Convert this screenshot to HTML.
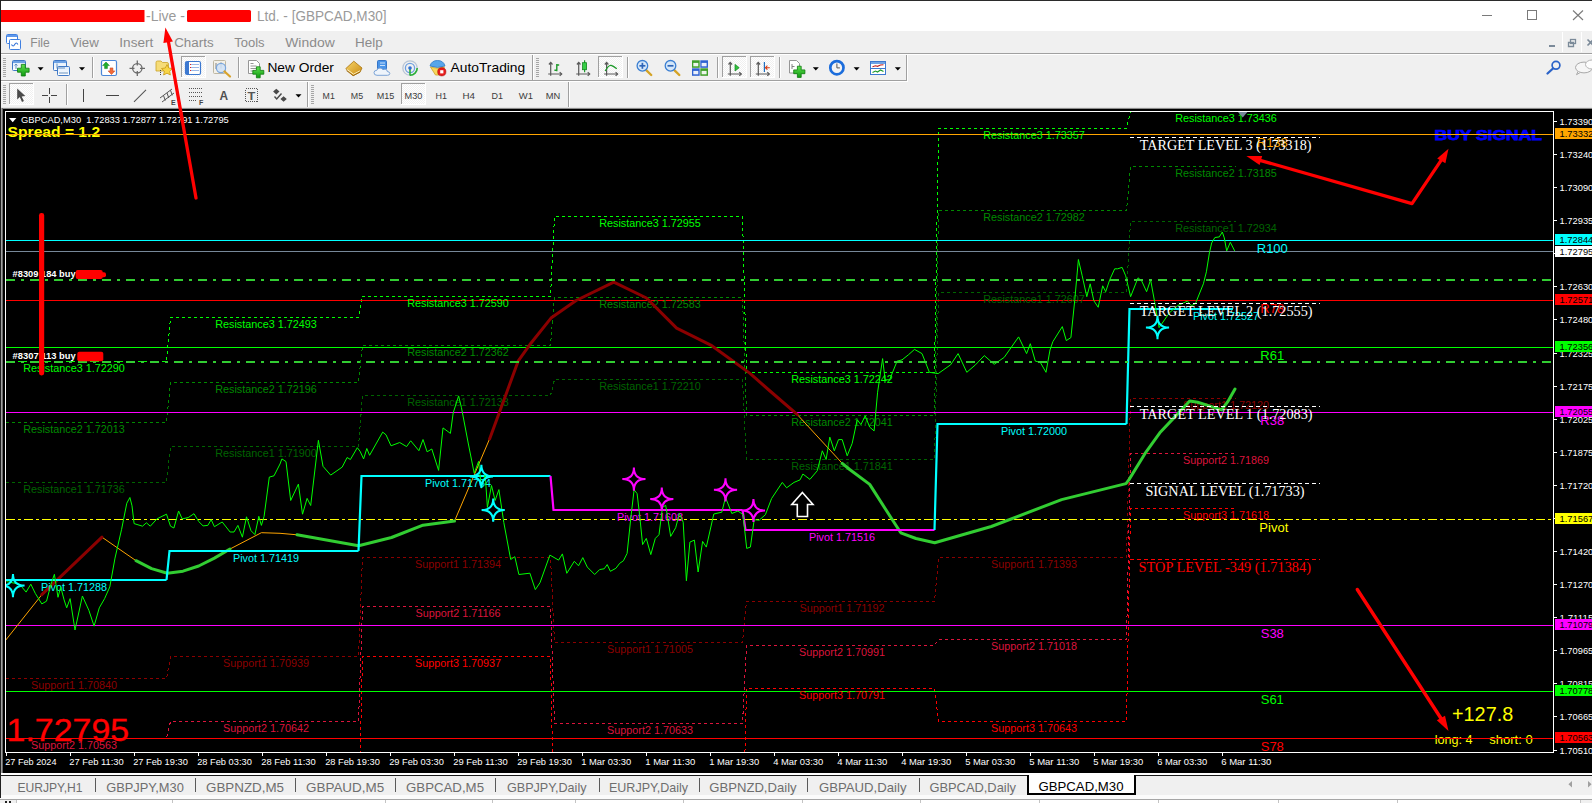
<!DOCTYPE html>
<html><head><meta charset="utf-8"><title>GBPCAD,M30</title>
<style>
html,body{margin:0;padding:0;background:#f0f0f0;overflow:hidden;}
body{width:1592px;height:803px;font-family:"Liberation Sans",sans-serif;}
svg{display:block;position:absolute;left:0;top:0;}
text{white-space:pre;}
</style></head><body>
<svg width="1592" height="803" viewBox="0 0 1592 803">
<rect x="0" y="0" width="1592" height="803" fill="#f0f0f0" />
<rect x="0" y="0" width="1592" height="31" fill="#ffffff" />
<rect x="0" y="0" width="1592" height="1" fill="#2b2b2b" />
<rect x="0" y="10" width="144.5" height="12" fill="#ff0000" />
<rect x="187" y="10" width="64" height="12" fill="#ff0000" rx="1.5"/>
<text x="146" y="20.6" font-family="Liberation Sans" font-size="14.2" fill="#9a9a9a" font-weight="normal" text-anchor="start" textLength="39" lengthAdjust="spacingAndGlyphs" >-Live -</text>
<text x="257" y="20.6" font-family="Liberation Sans" font-size="14.2" fill="#9a9a9a" font-weight="normal" text-anchor="start" textLength="129.5" lengthAdjust="spacingAndGlyphs" >Ltd. - [GBPCAD,M30]</text>
<g stroke="#7a7a7a" stroke-width="1" fill="none" shape-rendering="crispEdges">
<line x1="1482" y1="15.5" x2="1492" y2="15.5"/>
<rect x="1527.5" y="10.5" width="9" height="9"/>
</g>
<g stroke="#7a7a7a" stroke-width="1.1" fill="none"><line x1="1573" y1="10.5" x2="1583" y2="20"/><line x1="1583" y1="10.5" x2="1573" y2="20"/></g>
<rect x="0" y="31" width="1592" height="22" fill="#f0f0f0" />
<g fill="#ffffff" stroke="#3f7fe0" stroke-width="1"><rect x="6.5" y="34.5" width="11" height="9" rx="1"/><rect x="9.5" y="39.5" width="11" height="10" rx="1"/></g>
<rect x="7" y="35" width="10" height="2" fill="#5f97ea" />
<path d="M11.5 44.5 q1.6 3 3.2 0 t3.2 0" fill="none" stroke="#2f6fd6" stroke-width="1.1"/>
<text x="30.3" y="46.8" font-family="Liberation Sans" font-size="13.7" fill="#8b8b8b" font-weight="normal" text-anchor="start" textLength="19.5" lengthAdjust="spacingAndGlyphs" >File</text>
<text x="70.2" y="46.8" font-family="Liberation Sans" font-size="13.7" fill="#8b8b8b" font-weight="normal" text-anchor="start" textLength="28.6" lengthAdjust="spacingAndGlyphs" >View</text>
<text x="119.3" y="46.8" font-family="Liberation Sans" font-size="13.7" fill="#8b8b8b" font-weight="normal" text-anchor="start" textLength="34.0" lengthAdjust="spacingAndGlyphs" >Insert</text>
<text x="174.2" y="46.8" font-family="Liberation Sans" font-size="13.7" fill="#8b8b8b" font-weight="normal" text-anchor="start" textLength="39.4" lengthAdjust="spacingAndGlyphs" >Charts</text>
<text x="234.2" y="46.8" font-family="Liberation Sans" font-size="13.7" fill="#8b8b8b" font-weight="normal" text-anchor="start" textLength="30.4" lengthAdjust="spacingAndGlyphs" >Tools</text>
<text x="285.2" y="46.8" font-family="Liberation Sans" font-size="13.7" fill="#8b8b8b" font-weight="normal" text-anchor="start" textLength="49.5" lengthAdjust="spacingAndGlyphs" >Window</text>
<text x="355" y="46.8" font-family="Liberation Sans" font-size="13.7" fill="#8b8b8b" font-weight="normal" text-anchor="start" textLength="27.7" lengthAdjust="spacingAndGlyphs" >Help</text>
<rect x="1544" y="32" width="48" height="20" fill="#f0f0f0" />
<rect x="1562" y="32" width="1" height="20" fill="#ffffff" />
<rect x="1581" y="32" width="1" height="20" fill="#ffffff" />
<rect x="1549" y="45" width="6" height="2" fill="#7b8a99" />
<g fill="none" stroke="#7b8a99" stroke-width="1.3"><rect x="1570.5" y="39.5" width="5" height="4"/><path d="M1568.5 46.5 h5 v-4 h-5 z"/></g>
<path d="M1587.5 39.5 l6 6 m0 -6 l-6 6" stroke="#7b8a99" stroke-width="1.6" fill="none"/>
<rect x="0" y="53" width="1592" height="1" fill="#a0a0a0" />
<rect x="0" y="54" width="1592" height="1" fill="#ffffff" />
<rect x="0" y="80" width="907" height="1" fill="#a0a0a0" />
<rect x="0" y="81" width="907" height="1" fill="#ffffff" />
<rect x="906" y="55" width="1" height="26" fill="#a0a0a0" />
<rect x="907" y="55" width="1" height="27" fill="#ffffff" />
<rect x="532" y="55" width="1" height="25" fill="#a0a0a0" />
<rect x="533" y="55" width="1" height="25" fill="#ffffff" />
<rect x="568" y="82" width="1" height="25" fill="#a0a0a0" />
<rect x="569" y="82" width="1" height="25" fill="#ffffff" />
<rect x="307" y="82" width="1" height="25" fill="#a0a0a0" />
<rect x="308" y="82" width="1" height="25" fill="#ffffff" />
<rect x="3" y="58" width="3" height="1" fill="#a6a6a6" />
<rect x="3" y="60" width="3" height="1" fill="#a6a6a6" />
<rect x="3" y="62" width="3" height="1" fill="#a6a6a6" />
<rect x="3" y="64" width="3" height="1" fill="#a6a6a6" />
<rect x="3" y="66" width="3" height="1" fill="#a6a6a6" />
<rect x="3" y="68" width="3" height="1" fill="#a6a6a6" />
<rect x="3" y="70" width="3" height="1" fill="#a6a6a6" />
<rect x="3" y="72" width="3" height="1" fill="#a6a6a6" />
<rect x="3" y="74" width="3" height="1" fill="#a6a6a6" />
<rect x="3" y="76" width="3" height="1" fill="#a6a6a6" />
<rect x="536" y="58" width="3" height="1" fill="#a6a6a6" />
<rect x="536" y="60" width="3" height="1" fill="#a6a6a6" />
<rect x="536" y="62" width="3" height="1" fill="#a6a6a6" />
<rect x="536" y="64" width="3" height="1" fill="#a6a6a6" />
<rect x="536" y="66" width="3" height="1" fill="#a6a6a6" />
<rect x="536" y="68" width="3" height="1" fill="#a6a6a6" />
<rect x="536" y="70" width="3" height="1" fill="#a6a6a6" />
<rect x="536" y="72" width="3" height="1" fill="#a6a6a6" />
<rect x="536" y="74" width="3" height="1" fill="#a6a6a6" />
<rect x="536" y="76" width="3" height="1" fill="#a6a6a6" />
<rect x="3" y="85" width="3" height="1" fill="#a6a6a6" />
<rect x="3" y="87" width="3" height="1" fill="#a6a6a6" />
<rect x="3" y="89" width="3" height="1" fill="#a6a6a6" />
<rect x="3" y="91" width="3" height="1" fill="#a6a6a6" />
<rect x="3" y="93" width="3" height="1" fill="#a6a6a6" />
<rect x="3" y="95" width="3" height="1" fill="#a6a6a6" />
<rect x="3" y="97" width="3" height="1" fill="#a6a6a6" />
<rect x="3" y="99" width="3" height="1" fill="#a6a6a6" />
<rect x="3" y="101" width="3" height="1" fill="#a6a6a6" />
<rect x="3" y="103" width="3" height="1" fill="#a6a6a6" />
<rect x="311" y="85" width="3" height="1" fill="#a6a6a6" />
<rect x="311" y="87" width="3" height="1" fill="#a6a6a6" />
<rect x="311" y="89" width="3" height="1" fill="#a6a6a6" />
<rect x="311" y="91" width="3" height="1" fill="#a6a6a6" />
<rect x="311" y="93" width="3" height="1" fill="#a6a6a6" />
<rect x="311" y="95" width="3" height="1" fill="#a6a6a6" />
<rect x="311" y="97" width="3" height="1" fill="#a6a6a6" />
<rect x="311" y="99" width="3" height="1" fill="#a6a6a6" />
<rect x="311" y="101" width="3" height="1" fill="#a6a6a6" />
<rect x="311" y="103" width="3" height="1" fill="#a6a6a6" />
<rect x="92" y="57" width="1" height="21" fill="#a0a0a0" />
<rect x="93" y="57" width="1" height="21" fill="#ffffff" />
<rect x="238" y="57" width="1" height="21" fill="#a0a0a0" />
<rect x="239" y="57" width="1" height="21" fill="#ffffff" />
<rect x="627" y="57" width="1" height="21" fill="#a0a0a0" />
<rect x="628" y="57" width="1" height="21" fill="#ffffff" />
<rect x="717" y="57" width="1" height="21" fill="#a0a0a0" />
<rect x="718" y="57" width="1" height="21" fill="#ffffff" />
<rect x="779" y="57" width="1" height="21" fill="#a0a0a0" />
<rect x="780" y="57" width="1" height="21" fill="#ffffff" />
<rect x="66" y="84" width="1" height="21" fill="#a0a0a0" />
<rect x="67" y="84" width="1" height="21" fill="#ffffff" />
<defs><pattern id="chk" width="2" height="2" patternUnits="userSpaceOnUse"><rect width="2" height="2" fill="#ffffff"/><rect width="1" height="1" fill="#f0f0f0"/><rect x="1" y="1" width="1" height="1" fill="#f0f0f0"/></pattern><linearGradient id="gplus" x1="0" y1="0" x2="0" y2="1"><stop offset="0" stop-color="#5fe04f"/><stop offset="1" stop-color="#0f9a10"/></linearGradient><linearGradient id="gblue" x1="0" y1="0" x2="0" y2="1"><stop offset="0" stop-color="#dcebfb"/><stop offset="1" stop-color="#ffffff"/></linearGradient><linearGradient id="ggold" x1="0" y1="0" x2="1" y2="1"><stop offset="0" stop-color="#f7d56a"/><stop offset="1" stop-color="#c98a12"/></linearGradient></defs>
<rect x="181" y="56" width="25" height="22" fill="url(#chk)"/>
<rect x="181" y="56" width="25" height="1" fill="#a0a0a0" />
<rect x="181" y="56" width="1" height="22" fill="#a0a0a0" />
<rect x="181" y="77" width="25" height="1" fill="#ffffff" />
<rect x="205" y="56" width="1" height="22" fill="#ffffff" />
<rect x="598" y="56" width="25" height="22" fill="url(#chk)"/>
<rect x="598" y="56" width="25" height="1" fill="#a0a0a0" />
<rect x="598" y="56" width="1" height="22" fill="#a0a0a0" />
<rect x="598" y="77" width="25" height="1" fill="#ffffff" />
<rect x="622" y="56" width="1" height="22" fill="#ffffff" />
<rect x="722" y="56" width="25" height="22" fill="url(#chk)"/>
<rect x="722" y="56" width="25" height="1" fill="#a0a0a0" />
<rect x="722" y="56" width="1" height="22" fill="#a0a0a0" />
<rect x="722" y="77" width="25" height="1" fill="#ffffff" />
<rect x="746" y="56" width="1" height="22" fill="#ffffff" />
<rect x="750" y="56" width="25" height="22" fill="url(#chk)"/>
<rect x="750" y="56" width="25" height="1" fill="#a0a0a0" />
<rect x="750" y="56" width="1" height="22" fill="#a0a0a0" />
<rect x="750" y="77" width="25" height="1" fill="#ffffff" />
<rect x="774" y="56" width="1" height="22" fill="#ffffff" />
<rect x="9" y="83" width="25" height="22" fill="url(#chk)"/>
<rect x="9" y="83" width="25" height="1" fill="#a0a0a0" />
<rect x="9" y="83" width="1" height="22" fill="#a0a0a0" />
<rect x="9" y="104" width="25" height="1" fill="#ffffff" />
<rect x="33" y="83" width="1" height="22" fill="#ffffff" />
<rect x="401" y="83" width="25" height="22" fill="url(#chk)"/>
<rect x="401" y="83" width="25" height="1" fill="#a0a0a0" />
<rect x="401" y="83" width="1" height="22" fill="#a0a0a0" />
<rect x="401" y="104" width="25" height="1" fill="#ffffff" />
<rect x="425" y="83" width="1" height="22" fill="#ffffff" />
<path d="M37.6 67.2 h6 l-3 3.2 z" fill="#000"/>
<path d="M79 67.2 h6 l-3 3.2 z" fill="#000"/>
<path d="M812.8 67.2 h6 l-3 3.2 z" fill="#000"/>
<path d="M853.6 67.2 h6 l-3 3.2 z" fill="#000"/>
<path d="M894.8 67.2 h6 l-3 3.2 z" fill="#000"/>
<path d="M295.5 94.2 h6 l-3 3.2 z" fill="#000"/>
<rect x="12.5" y="60.5" width="13" height="10" rx="1" fill="url(#gblue)" stroke="#3f78c6"/>
<rect x="13" y="61" width="12" height="2" fill="#6ea2e4" />
<path d="M16 64 v5 m-1.5 -3.5 l1.5 -1.5 1.5 1.5" stroke="#5a86b8" fill="none" stroke-width="0.9"/>
<path d="M21.3 64.4 h4 v3.8 h3.8 v4 h-3.8 v3.8 h-4 v-3.8 h-3.8 v-4 h3.8 z" fill="url(#gplus)" stroke="#0b7a0c" stroke-width="0.8"/>
<rect x="53.5" y="60.5" width="13" height="10" rx="1" fill="url(#gblue)" stroke="#3f78c6"/>
<rect x="57.5" y="66.5" width="12" height="9" rx="1" fill="url(#gblue)" stroke="#3f78c6"/>
<rect x="54" y="61" width="12" height="2" fill="#6ea2e4" />
<path d="M57 63.5 v5 M58 68 h7 M59 73 h9" stroke="#5a86b8" fill="none" stroke-width="0.9"/>
<rect x="101.5" y="60.5" width="15" height="15" rx="1.5" fill="#ffffff" stroke="#4a86d8" stroke-width="1.2"/>
<path d="M106 62 l3.4 3.6 h-2 v3 h-2.8 v-3 h-2 z" fill="#1fae2a" stroke="#0d7d15" stroke-width="0.5"/>
<path d="M111.5 74.5 l3.4 -3.6 h-2 v-3 h-2.8 v3 h-2 z" fill="#f26b3a" stroke="#c23a12" stroke-width="0.5"/>
<g stroke="#6a6a6a" fill="none" stroke-width="1.3"><circle cx="137.3" cy="68.3" r="4.7"/><path d="M137.3 60.5 v5 M137.3 71 v5 M129.5 68.3 h5 M140 68.3 h5"/></g>
<path d="M156 62.5 q0 -1.5 1.5 -1.5 h3.5 l1.5 1.5 h4.5 q1.5 0 1.5 1.5 v7 h-12.5 z" fill="#f6dc78" stroke="#c9a227" stroke-width="0.8"/>
<path d="M167 64.5 l1.7 3.5 3.8 .5 -2.8 2.7 .7 3.8 -3.4 -1.8 -3.4 1.8 .7 -3.8 -2.8 -2.7 3.8 -.5 z" fill="#f8d648" stroke="#c99a18" stroke-width="0.8"/>
<path d="M160.5 70 v6" stroke="#444" stroke-width="1" stroke-dasharray="1 1"/>
<rect x="185.5" y="61.5" width="15" height="13" rx="1.5" fill="#ffffff" stroke="#3c78d0" stroke-width="1.2"/>
<rect x="186" y="62" width="3" height="12" fill="#3c78d0" />
<rect x="191" y="64" width="8" height="1" fill="#9ab8e6" />
<rect x="191" y="67" width="8" height="1" fill="#9ab8e6" />
<rect x="191" y="70" width="8" height="1" fill="#9ab8e6" />
<rect x="190" y="64" width="1" height="1" fill="#e02020" />
<rect x="190" y="67" width="1" height="1" fill="#e02020" />
<rect x="190" y="70" width="1" height="1" fill="#e02020" />
<rect x="213.5" y="60.5" width="12" height="13" rx="1" fill="#f4f1e8" stroke="#b8b09a" stroke-width="0.9"/>
<path d="M216 63 v6 M221 62.5 v6" stroke="#777" stroke-width="0.9"/>
<circle cx="221" cy="68" r="4.6" fill="#cfe2f7" fill-opacity=".85" stroke="#7aa6dc" stroke-width="1.2"/>
<path d="M224.5 71.5 l5.5 5" stroke="#d8a22a" stroke-width="2.2" stroke-linecap="round"/>
<path d="M248.5 60.5 h8 l3 3 v10 h-11 z" fill="#ffffff" stroke="#8a8a8a" stroke-width="0.9"/>
<path d="M250.5 63.5 h3 M250.5 66 h6 M250.5 68.5 h6 M250.5 71 h4" stroke="#8a8a8a" stroke-width="0.9"/>
<path d="M256.40000000000003 66.8 h3.8 v3.6 h3.6 v3.8 h-3.6 v3.6 h-3.8 v-3.6 h-3.6 v-3.8 h3.6 z" fill="url(#gplus)" stroke="#0b7a0c" stroke-width="0.8"/>
<text x="267.4" y="71.9" font-family="Liberation Sans" font-size="13.4" fill="#000000" font-weight="normal" text-anchor="start" textLength="66.5" lengthAdjust="spacingAndGlyphs" >New Order</text>
<path d="M345.8 68.6 l8 -7.4 8.2 6.8 -2 4.2 -7 3.6 z" fill="url(#ggold)" stroke="#a8720c" stroke-width="0.8" stroke-linejoin="round"/>
<path d="M347.2 69.6 l6.4 4.6 6.4 -3.4" fill="none" stroke="#fff1c0" stroke-width="1"/>
<path d="M346.4 70.6 l6.8 5 7 -3.8" fill="none" stroke="#9a6408" stroke-width="0.8"/>
<rect x="377.5" y="60.5" width="9" height="9" rx="1" fill="#4a94e8" stroke="#2a6cc4" stroke-width="0.9"/>
<path d="M380 63 h5 M380 65.5 h5" stroke="#d8e9fb" stroke-width="0.9"/>
<path d="M377 75.3 q-3 0 -3 -2.6 q0 -2.4 2.8 -2.4 q.6 -2.3 3.2 -2.3 q2.2 0 3 1.8 q.8 -.9 2.3 -.6 q2 .3 2 2.3 q2.5 .2 2.5 2 q0 1.8 -2.4 1.8 z" fill="#eef4fb" stroke="#6f9bd2" stroke-width="0.9"/>
<g fill="none" stroke-width="1.3"><circle cx="410" cy="68" r="7.2" stroke="#b9c6d6"/><circle cx="410" cy="68" r="4.6" stroke="#6fa0e0"/><path d="M410 75.2 a7.2 7.2 0 0 0 7.2 -7.2" stroke="#2bb038" stroke-width="1.6"/><path d="M410 68 v7.4" stroke="#2bb038" stroke-width="1.6"/></g><circle cx="410" cy="68" r="1.8" fill="#2f6fd6"/>
<path d="M430 66 q1.5 -5.5 7.5 -5.5 q6 0 7.5 5.5 q-7.5 3 -15 0 z" fill="#58a6ea" stroke="#2f78c8" stroke-width="0.8"/>
<path d="M430.5 67 q7 2.8 14 0 l-5.5 8 h-3.5 z" fill="#f8d85a" stroke="#c9a227" stroke-width="0.8"/>
<circle cx="441.8" cy="71.8" r="4.1" fill="#e81c1c" stroke="#a80c0c" stroke-width="0.6"/>
<rect x="440.2" y="70.2" width="3.2" height="3.2" fill="#ffffff" />
<text x="450.6" y="71.9" font-family="Liberation Sans" font-size="13.4" fill="#000000" font-weight="normal" text-anchor="start" textLength="74.6" lengthAdjust="spacingAndGlyphs" >AutoTrading</text>
<g stroke="#5a5a5a" stroke-width="1.2" fill="none"><path d="M550.7 62.5 V75.8 M548.2 74 H561.7"/><path d="M548.9000000000001 64.5 L550.7 62.5 L552.5 64.5 M559.7 72.2 L561.7 74 L559.7 75.8"/></g>
<path d="M556.8 64 V71.2 M556.8 65 h2.4 M554.4 70.2 h2.4" stroke="#1d9a2a" stroke-width="1.4" fill="none"/>
<g stroke="#5a5a5a" stroke-width="1.2" fill="none"><path d="M578.7 62.5 V75.8 M576.2 74 H589.7"/><path d="M576.9000000000001 64.5 L578.7 62.5 L580.5 64.5 M587.7 72.2 L589.7 74 L587.7 75.8"/></g>
<path d="M584.6 60.2 V72.3" stroke="#1d9a2a" stroke-width="1.2"/><rect x="582.6" y="62.7" width="4" height="7" fill="#35cf45" stroke="#13851f" stroke-width="0.8"/>
<g stroke="#5a5a5a" stroke-width="1.2" fill="none"><path d="M606.6 62.5 V75.8 M604.1 74 H617.6"/><path d="M604.8000000000001 64.5 L606.6 62.5 L608.4 64.5 M615.6 72.2 L617.6 74 L615.6 75.8"/></g>
<path d="M605.2 71 q3.6 -6.5 6 -5.6 t5.6 3.4" stroke="#1d9a2a" stroke-width="1.3" fill="none"/>
<path d="M646.1999999999999 70.2 l5 4.8" stroke="#d4a326" stroke-width="2.4" stroke-linecap="round"/>
<circle cx="642.4" cy="65.8" r="5.3" fill="#d5e7f9" stroke="#3b7fd2" stroke-width="1.3"/>
<path d="M639.4 65.8 h6" stroke="#2f66b8" stroke-width="1.7"/>
<path d="M642.4 62.8 v6" stroke="#2f66b8" stroke-width="1.7"/>
<path d="M674.3 70.2 l5 4.8" stroke="#d4a326" stroke-width="2.4" stroke-linecap="round"/>
<circle cx="670.5" cy="65.8" r="5.3" fill="#d5e7f9" stroke="#3b7fd2" stroke-width="1.3"/>
<path d="M667.5 65.8 h6" stroke="#2f66b8" stroke-width="1.7"/>
<rect x="692" y="60.3" width="7.7" height="7.5" fill="#3fa02a" />
<rect x="693.3" y="62.9" width="5" height="3.4" fill="#ffffff" fill-opacity=".9"/>
<rect x="700.3" y="60.3" width="7.7" height="7.5" fill="#2f63d2" />
<rect x="701.5999999999999" y="62.9" width="5" height="3.4" fill="#ffffff" fill-opacity=".9"/>
<rect x="692" y="68.3" width="7.7" height="7.5" fill="#2f63d2" />
<rect x="693.3" y="70.89999999999999" width="5" height="3.4" fill="#ffffff" fill-opacity=".9"/>
<rect x="700.3" y="68.3" width="7.7" height="7.5" fill="#3fa02a" />
<rect x="701.5999999999999" y="70.89999999999999" width="5" height="3.4" fill="#ffffff" fill-opacity=".9"/>
<g stroke="#5a5a5a" stroke-width="1.2" fill="none"><path d="M730.3 62.5 V75.8 M727.8 74 H741.3"/><path d="M728.5 64.5 L730.3 62.5 L732.0999999999999 64.5 M739.3 72.2 L741.3 74 L739.3 75.8"/></g>
<path d="M735 64.4 v6.6 l4.2 -3.3 z" fill="#2fc43c" stroke="#13851f" stroke-width="0.7"/>
<g stroke="#5a5a5a" stroke-width="1.2" fill="none"><path d="M758.3 62.5 V75.8 M755.8 74 H769.3"/><path d="M756.5 64.5 L758.3 62.5 L760.0999999999999 64.5 M767.3 72.2 L769.3 74 L767.3 75.8"/></g>
<path d="M764.4 62 v10" stroke="#1f6fc0" stroke-width="1.2"/><path d="M769.8 67.7 h-4.4 m2 -2 l-2 2 2 2" stroke="#d63a12" stroke-width="1.1" fill="none"/>
<path d="M789.5 60.5 h7 l3 3 v9.5 h-10 z" fill="#ffffff" stroke="#8a8a8a" stroke-width="0.9"/>
<path d="M792 64 v5 m0 -2.5 h2.5" stroke="#777" stroke-width="0.9" fill="none"/>
<path d="M797.4 66.2 h3.8 v3.6999999999999997 h3.6999999999999997 v3.8 h-3.6999999999999997 v3.6999999999999997 h-3.8 v-3.6999999999999997 h-3.6999999999999997 v-3.8 h3.6999999999999997 z" fill="url(#gplus)" stroke="#0b7a0c" stroke-width="0.8"/>
<circle cx="836.9" cy="67.7" r="6.6" fill="#f4f4f4" stroke="#1c6ddc" stroke-width="2.7"/>
<path d="M836.9 63.5 v4.4 h3" stroke="#555" stroke-width="1" fill="none"/>
<rect x="870.5" y="61.5" width="15" height="13" fill="#ffffff" stroke="#3c78d0" stroke-width="1"/>
<rect x="871" y="62" width="14" height="2" fill="#6ea2e4" />
<rect x="871" y="68" width="14" height="1" fill="#3c78d0" />
<path d="M872.5 66.8 l3 -1 2 .5 3 -1.3 3 -.2" stroke="#c02020" stroke-width="1.1" fill="none"/>
<path d="M872.5 72.5 l3 -1.5 2 1 3 -2 3 1.5" stroke="#1d9a2a" stroke-width="1.1" fill="none"/>
<circle cx="1556" cy="65.3" r="3.9" fill="none" stroke="#2b63c8" stroke-width="1.7"/><path d="M1553 68.5 l-5.5 5" stroke="#2b63c8" stroke-width="2.3" stroke-linecap="round"/>
<ellipse cx="1584" cy="67.5" rx="8.5" ry="5.4" fill="#f6f6f6" stroke="#a8a8a8" stroke-width="1"/><path d="M1578 71.5 l-1.5 3.2 4 -2.4" fill="#f6f6f6" stroke="#a8a8a8" stroke-width="1"/>
<ellipse cx="1592" cy="64.5" rx="6.5" ry="4.5" fill="#fdfdfd" stroke="#b4b4b4" stroke-width="1"/>
<path d="M17.2 88.5 v11 l2.6 -2.4 2.2 4.9 1.9 -.9 -2.2 -4.7 3.6 -.3 z" fill="#4a4a4a"/>
<path d="M49.5 88 v6 m0 3 v6 M42 95.5 h6 m3 0 h6" stroke="#444" stroke-width="1" shape-rendering="crispEdges"/>
<rect x="83" y="89" width="1" height="13" fill="#444" />
<rect x="106" y="95" width="13" height="1" fill="#444" />
<path d="M134 101.8 L146 89.8" stroke="#555" stroke-width="1.1"/>
<g stroke="#555" stroke-width="1" fill="none"><path d="M160 98 l12 -9 M162 102 l12 -9 M163.5 95.5 l1.8 5 M167 93 l1.8 5 M170.5 90.3 l1.8 5"/></g>
<text x="171" y="104.5" font-family="Liberation Sans" font-size="7" fill="#444" font-weight="bold" text-anchor="start" >E</text>
<path d="M189 88.5 H202" stroke="#555" stroke-width="1" stroke-dasharray="1 1"/>
<path d="M189 92.5 H202" stroke="#555" stroke-width="1" stroke-dasharray="1 1"/>
<path d="M189 96.5 H202" stroke="#555" stroke-width="1" stroke-dasharray="1 1"/>
<path d="M189 100.5 H197" stroke="#555" stroke-width="1" stroke-dasharray="1 1"/>
<text x="199" y="104.5" font-family="Liberation Sans" font-size="7" fill="#444" font-weight="bold" text-anchor="start" >F</text>
<text x="219.4" y="99.6" font-family="Liberation Sans" font-size="12.5" fill="#4f4f4f" font-weight="bold" text-anchor="start" textLength="8.6" lengthAdjust="spacingAndGlyphs" >A</text>
<rect x="245.5" y="88.5" width="12" height="13" fill="none" stroke="#555" stroke-width="1" stroke-dasharray="1 1" shape-rendering="crispEdges"/>
<text x="247.6" y="99.5" font-family="Liberation Sans" font-size="11.5" fill="#555" font-weight="bold" text-anchor="start" textLength="7.8" lengthAdjust="spacingAndGlyphs" >T</text>
<path d="M276.3 88.8 l3.2 2.8 -3.2 2.8 -3.2 -2.8 z M283.6 96.2 l3.2 2.8 -3.2 2.8 -3.2 -2.8 z" fill="#4a4a4a"/><path d="M274.5 96.5 l2.2 2.4 4.8 -5.4" stroke="#4a4a4a" stroke-width="1.4" fill="none"/>
<text x="322.6" y="98.8" font-family="Liberation Sans" font-size="9.6" fill="#3c3c3c" font-weight="normal" text-anchor="start" textLength="12.2" lengthAdjust="spacingAndGlyphs" >M1</text>
<text x="350.8" y="98.8" font-family="Liberation Sans" font-size="9.6" fill="#3c3c3c" font-weight="normal" text-anchor="start" textLength="12.3" lengthAdjust="spacingAndGlyphs" >M5</text>
<text x="376.8" y="98.8" font-family="Liberation Sans" font-size="9.6" fill="#3c3c3c" font-weight="normal" text-anchor="start" textLength="17.6" lengthAdjust="spacingAndGlyphs" >M15</text>
<text x="404.6" y="98.8" font-family="Liberation Sans" font-size="9.6" fill="#3c3c3c" font-weight="normal" text-anchor="start" textLength="17.9" lengthAdjust="spacingAndGlyphs" >M30</text>
<text x="435.6" y="98.8" font-family="Liberation Sans" font-size="9.6" fill="#3c3c3c" font-weight="normal" text-anchor="start" textLength="11.5" lengthAdjust="spacingAndGlyphs" >H1</text>
<text x="462.4" y="98.8" font-family="Liberation Sans" font-size="9.6" fill="#3c3c3c" font-weight="normal" text-anchor="start" textLength="12.5" lengthAdjust="spacingAndGlyphs" >H4</text>
<text x="491.4" y="98.8" font-family="Liberation Sans" font-size="9.6" fill="#3c3c3c" font-weight="normal" text-anchor="start" textLength="11.5" lengthAdjust="spacingAndGlyphs" >D1</text>
<text x="518.8" y="98.8" font-family="Liberation Sans" font-size="9.6" fill="#3c3c3c" font-weight="normal" text-anchor="start" textLength="14.2" lengthAdjust="spacingAndGlyphs" >W1</text>
<text x="545.7" y="98.8" font-family="Liberation Sans" font-size="9.6" fill="#3c3c3c" font-weight="normal" text-anchor="start" textLength="14.5" lengthAdjust="spacingAndGlyphs" >MN</text>
<rect x="0" y="107" width="1592" height="1" fill="#e3e3e3" />
<rect x="0" y="108" width="1592" height="1" fill="#8c8c8c" />
<rect x="3" y="109" width="1589" height="664" fill="#000000" />
<rect x="0" y="0" width="1" height="803" fill="#202020" />
<rect x="1" y="108" width="1" height="667" fill="#a0a0a0" />
<rect x="2" y="108" width="1" height="667" fill="#696969" />
<rect x="0" y="773" width="1592" height="2" fill="#ffffff" />
<rect x="0" y="775" width="1592" height="1" fill="#1a1a1a" />
<rect x="0" y="776" width="1592" height="19" fill="#f0f0f0" />
<rect x="0" y="795" width="1592" height="4" fill="#fbfbfb" />
<rect x="0" y="799" width="1592" height="1" fill="#a6a6a6" />
<rect x="0" y="800" width="1592" height="3" fill="#f0f0f0" />
<rect x="17" y="800" width="1563" height="3" fill="#ffffff" />
<rect x="16" y="800" width="1" height="3" fill="#c4c4c4" />
<rect x="172" y="800" width="1" height="3" fill="#c4c4c4" />
<rect x="385" y="800" width="1" height="3" fill="#c4c4c4" />
<rect x="492" y="800" width="1" height="3" fill="#c4c4c4" />
<rect x="575" y="800" width="1" height="3" fill="#c4c4c4" />
<rect x="683" y="800" width="1" height="3" fill="#c4c4c4" />
<rect x="802" y="800" width="1" height="3" fill="#c4c4c4" />
<rect x="920" y="800" width="1" height="3" fill="#c4c4c4" />
<rect x="1039" y="800" width="1" height="3" fill="#c4c4c4" />
<rect x="1158" y="800" width="1" height="3" fill="#c4c4c4" />
<rect x="1278" y="800" width="1" height="3" fill="#c4c4c4" />
<rect x="1397" y="800" width="1" height="3" fill="#c4c4c4" />
<rect x="1580" y="800" width="1" height="3" fill="#c4c4c4" />
<rect x="5" y="801" width="2" height="2" fill="#222" />
<rect x="9" y="801" width="2" height="2" fill="#222" />
<rect x="1027" y="773" width="108" height="21" fill="#ffffff" />
<rect x="1027" y="775" width="2" height="20" fill="#000" />
<rect x="1134" y="775" width="2" height="20" fill="#000" />
<rect x="1027" y="793" width="109" height="2" fill="#000" />
<text x="17.4" y="791.5" font-family="Liberation Sans" font-size="12.9" fill="#6e6e6e" font-weight="normal" text-anchor="start" textLength="65.1" lengthAdjust="spacingAndGlyphs" >EURJPY,H1</text>
<text x="106.2" y="791.5" font-family="Liberation Sans" font-size="12.9" fill="#6e6e6e" font-weight="normal" text-anchor="start" textLength="77.6" lengthAdjust="spacingAndGlyphs" >GBPJPY,M30</text>
<text x="206" y="791.5" font-family="Liberation Sans" font-size="12.9" fill="#6e6e6e" font-weight="normal" text-anchor="start" textLength="78" lengthAdjust="spacingAndGlyphs" >GBPNZD,M5</text>
<text x="306" y="791.5" font-family="Liberation Sans" font-size="12.9" fill="#6e6e6e" font-weight="normal" text-anchor="start" textLength="78.2" lengthAdjust="spacingAndGlyphs" >GBPAUD,M5</text>
<text x="406" y="791.5" font-family="Liberation Sans" font-size="12.9" fill="#6e6e6e" font-weight="normal" text-anchor="start" textLength="78" lengthAdjust="spacingAndGlyphs" >GBPCAD,M5</text>
<text x="507" y="791.5" font-family="Liberation Sans" font-size="12.9" fill="#6e6e6e" font-weight="normal" text-anchor="start" textLength="79.5" lengthAdjust="spacingAndGlyphs" >GBPJPY,Daily</text>
<text x="609" y="791.5" font-family="Liberation Sans" font-size="12.9" fill="#6e6e6e" font-weight="normal" text-anchor="start" textLength="79" lengthAdjust="spacingAndGlyphs" >EURJPY,Daily</text>
<text x="709.3" y="791.5" font-family="Liberation Sans" font-size="12.9" fill="#6e6e6e" font-weight="normal" text-anchor="start" textLength="87.3" lengthAdjust="spacingAndGlyphs" >GBPNZD,Daily</text>
<text x="819" y="791.5" font-family="Liberation Sans" font-size="12.9" fill="#6e6e6e" font-weight="normal" text-anchor="start" textLength="87.5" lengthAdjust="spacingAndGlyphs" >GBPAUD,Daily</text>
<text x="929.4" y="791.5" font-family="Liberation Sans" font-size="12.9" fill="#6e6e6e" font-weight="normal" text-anchor="start" textLength="86.6" lengthAdjust="spacingAndGlyphs" >GBPCAD,Daily</text>
<text x="1038.5" y="791.4" font-family="Liberation Sans" font-size="12.9" fill="#000" font-weight="normal" text-anchor="start" textLength="85" lengthAdjust="spacingAndGlyphs" >GBPCAD,M30</text>
<rect x="95" y="778" width="1" height="14" fill="#5a5a5a" />
<rect x="195" y="778" width="1" height="14" fill="#5a5a5a" />
<rect x="295" y="778" width="1" height="14" fill="#5a5a5a" />
<rect x="395" y="778" width="1" height="14" fill="#5a5a5a" />
<rect x="495" y="778" width="1" height="14" fill="#5a5a5a" />
<rect x="599" y="778" width="1" height="14" fill="#5a5a5a" />
<rect x="699" y="778" width="1" height="14" fill="#5a5a5a" />
<rect x="807" y="778" width="1" height="14" fill="#5a5a5a" />
<rect x="919" y="778" width="1" height="14" fill="#5a5a5a" />
<path d="M1572 781 v6.4 l-3.6 -3.2 z M1588 781 v6.4 l3.6 -3.2 z" fill="#a0a0a0"/>
<rect x="0" y="0" width="1" height="798" fill="#202020" />
<rect x="5" y="111" width="1549" height="1" fill="#ffffff" />
<rect x="5" y="752" width="1549" height="1" fill="#ffffff" />
<rect x="5" y="111" width="1" height="642" fill="#ffffff" />
<rect x="1553" y="111" width="1" height="642" fill="#ffffff" />
<clipPath id="cp"><rect x="6" y="112" width="1547" height="640"/></clipPath>
<g clip-path="url(#cp)">
<polyline points="0.0,482.5 166.5,482.5 170.5,446.5 358.5,446.5 362.5,395.5 550.5,395.5 554.5,379.5 742.5,379.5 746.5,459.5 934.5,459.5 938.5,292.5 1126.5,292.5 1130.5,221.5 1235.5,221.5" fill="none" stroke="#006400" stroke-width="1" stroke-dasharray="3 3" shape-rendering="crispEdges"/>
<polyline points="0.0,422.5 166.5,422.5 170.5,382.5 358.5,382.5 362.5,345.5 550.5,345.5 554.5,297.5 742.5,297.5 746.5,415.5 934.5,415.5 938.5,210.5 1126.5,210.5 1130.5,166.5 1235.5,166.5" fill="none" stroke="#008a00" stroke-width="1" stroke-dasharray="3 3" shape-rendering="crispEdges"/>
<polyline points="0.0,361.5 166.5,361.5 170.5,317.5 358.5,317.5 362.5,296.5 550.5,296.5 554.5,216.5 742.5,216.5 746.5,372.5 934.5,372.5 938.5,128.5 1126.5,128.5 1130.5,111.5 1235.5,111.5" fill="none" stroke="#00ff00" stroke-width="1" stroke-dasharray="3 3" shape-rendering="crispEdges"/>
<polyline points="0.0,678.5 166.5,678.5 170.5,656.5 358.5,656.5 362.5,557.5 550.5,557.5 554.5,642.5 742.5,642.5 746.5,601.5 934.5,601.5 938.5,557.5 1126.5,557.5 1130.5,398.5 1235.5,398.5" fill="none" stroke="#8b0000" stroke-width="1" stroke-dasharray="3 3" shape-rendering="crispEdges"/>
<polyline points="0.0,738.5 166.5,738.5 170.5,721.5 358.5,721.5 362.5,606.5 550.5,606.5 554.5,723.5 742.5,723.5 746.5,645.5 934.5,645.5 938.5,639.5 1126.5,639.5 1130.5,453.5 1235.5,453.5" fill="none" stroke="#dc143c" stroke-width="1" stroke-dasharray="3 3" shape-rendering="crispEdges"/>
<polyline points="0.0,836.5 166.5,836.5 170.5,826.5 358.5,826.5 362.5,656.5 550.5,656.5 554.5,854.5 742.5,854.5 746.5,688.5 934.5,688.5 938.5,721.5 1126.5,721.5 1130.5,508.5 1235.5,508.5" fill="none" stroke="#ff0000" stroke-width="1" stroke-dasharray="3 3" shape-rendering="crispEdges"/>
<text x="7.6" y="136.8" font-family="Liberation Sans" font-size="14.9" fill="#ffff00" font-weight="bold" text-anchor="start" textLength="92.5" lengthAdjust="spacingAndGlyphs" >Spread = 1.2</text>
<text x="1434.5" y="139.8" font-family="Liberation Sans" font-size="15" fill="#0000ff" font-weight="bold" text-anchor="start" textLength="107.5" lengthAdjust="spacingAndGlyphs" stroke="#0000ff" stroke-width="0.75">BUY SIGNAL</text>
<text x="1452" y="721.4" font-family="Liberation Sans" font-size="20" fill="#ffff00" font-weight="normal" text-anchor="start" textLength="61.2" lengthAdjust="spacingAndGlyphs" >+127.8</text>
<text x="1434.7" y="743.8" font-family="Liberation Sans" font-size="12.6" fill="#ffff00" font-weight="normal" text-anchor="start" textLength="37.8" lengthAdjust="spacingAndGlyphs" >long: 4</text>
<text x="1489.3" y="743.8" font-family="Liberation Sans" font-size="12.6" fill="#ffff00" font-weight="normal" text-anchor="start" textLength="43.3" lengthAdjust="spacingAndGlyphs" >short: 0</text>
<rect x="6" y="134" width="1547" height="1" fill="#ffa500" />
<rect x="6" y="240" width="1547" height="1" fill="#00ffff" />
<rect x="6" y="251" width="1547" height="1" fill="#778899" />
<rect x="6" y="300" width="1547" height="1" fill="#ff0000" />
<rect x="6" y="347" width="1547" height="1" fill="#00ff00" />
<rect x="6" y="412" width="1547" height="1" fill="#ff00ff" />
<rect x="6" y="625" width="1547" height="1" fill="#ff00ff" />
<rect x="6" y="691" width="1547" height="1" fill="#00ff00" />
<rect x="6" y="738" width="1547" height="1" fill="#ff0000" />
<path d="M6 519.5 H1553" stroke="#ffff00" stroke-width="1" stroke-dasharray="9 3 3 3" shape-rendering="crispEdges"/>
<text x="74" y="372.3" font-family="Liberation Sans" font-size="10.8" fill="#00ff00" font-weight="normal" text-anchor="middle" >Resistance3 1.72290</text>
<text x="266" y="328.3" font-family="Liberation Sans" font-size="10.8" fill="#00ff00" font-weight="normal" text-anchor="middle" >Resistance3 1.72493</text>
<text x="458" y="307.3" font-family="Liberation Sans" font-size="10.8" fill="#00ff00" font-weight="normal" text-anchor="middle" >Resistance3 1.72590</text>
<text x="650" y="227.3" font-family="Liberation Sans" font-size="10.8" fill="#00ff00" font-weight="normal" text-anchor="middle" >Resistance3 1.72955</text>
<text x="842" y="383.3" font-family="Liberation Sans" font-size="10.8" fill="#00ff00" font-weight="normal" text-anchor="middle" >Resistance3 1.72242</text>
<text x="1034" y="139.3" font-family="Liberation Sans" font-size="10.8" fill="#00ff00" font-weight="normal" text-anchor="middle" >Resistance3 1.73357</text>
<text x="1226" y="122.3" font-family="Liberation Sans" font-size="10.8" fill="#00ff00" font-weight="normal" text-anchor="middle" >Resistance3 1.73436</text>
<text x="74" y="433.3" font-family="Liberation Sans" font-size="10.8" fill="#008a00" font-weight="normal" text-anchor="middle" >Resistance2 1.72013</text>
<text x="266" y="393.3" font-family="Liberation Sans" font-size="10.8" fill="#008a00" font-weight="normal" text-anchor="middle" >Resistance2 1.72196</text>
<text x="458" y="356.3" font-family="Liberation Sans" font-size="10.8" fill="#008a00" font-weight="normal" text-anchor="middle" >Resistance2 1.72362</text>
<text x="650" y="308.3" font-family="Liberation Sans" font-size="10.8" fill="#008a00" font-weight="normal" text-anchor="middle" >Resistance2 1.72583</text>
<text x="842" y="426.3" font-family="Liberation Sans" font-size="10.8" fill="#008a00" font-weight="normal" text-anchor="middle" >Resistance2 1.72041</text>
<text x="1034" y="221.3" font-family="Liberation Sans" font-size="10.8" fill="#008a00" font-weight="normal" text-anchor="middle" >Resistance2 1.72982</text>
<text x="1226" y="177.3" font-family="Liberation Sans" font-size="10.8" fill="#008a00" font-weight="normal" text-anchor="middle" >Resistance2 1.73185</text>
<text x="74" y="493.3" font-family="Liberation Sans" font-size="10.8" fill="#006400" font-weight="normal" text-anchor="middle" >Resistance1 1.71736</text>
<text x="266" y="457.3" font-family="Liberation Sans" font-size="10.8" fill="#006400" font-weight="normal" text-anchor="middle" >Resistance1 1.71900</text>
<text x="458" y="406.3" font-family="Liberation Sans" font-size="10.8" fill="#006400" font-weight="normal" text-anchor="middle" >Resistance1 1.72133</text>
<text x="650" y="390.3" font-family="Liberation Sans" font-size="10.8" fill="#006400" font-weight="normal" text-anchor="middle" >Resistance1 1.72210</text>
<text x="842" y="470.3" font-family="Liberation Sans" font-size="10.8" fill="#006400" font-weight="normal" text-anchor="middle" >Resistance1 1.71841</text>
<text x="1034" y="303.3" font-family="Liberation Sans" font-size="10.8" fill="#006400" font-weight="normal" text-anchor="middle" >Resistance1 1.72607</text>
<text x="1226" y="232.3" font-family="Liberation Sans" font-size="10.8" fill="#006400" font-weight="normal" text-anchor="middle" >Resistance1 1.72934</text>
<text x="74" y="689.3" font-family="Liberation Sans" font-size="10.8" fill="#8b0000" font-weight="normal" text-anchor="middle" >Support1 1.70840</text>
<text x="266" y="667.3" font-family="Liberation Sans" font-size="10.8" fill="#8b0000" font-weight="normal" text-anchor="middle" >Support1 1.70939</text>
<text x="458" y="568.3" font-family="Liberation Sans" font-size="10.8" fill="#8b0000" font-weight="normal" text-anchor="middle" >Support1 1.71394</text>
<text x="650" y="653.3" font-family="Liberation Sans" font-size="10.8" fill="#8b0000" font-weight="normal" text-anchor="middle" >Support1 1.71005</text>
<text x="842" y="612.3" font-family="Liberation Sans" font-size="10.8" fill="#8b0000" font-weight="normal" text-anchor="middle" >Support1 1.71192</text>
<text x="1034" y="568.3" font-family="Liberation Sans" font-size="10.8" fill="#8b0000" font-weight="normal" text-anchor="middle" >Support1 1.71393</text>
<text x="1226" y="409.3" font-family="Liberation Sans" font-size="10.8" fill="#8b0000" font-weight="normal" text-anchor="middle" >Support1 1.72120</text>
<text x="74" y="749.3" font-family="Liberation Sans" font-size="10.8" fill="#dc143c" font-weight="normal" text-anchor="middle" >Support2 1.70563</text>
<text x="266" y="732.3" font-family="Liberation Sans" font-size="10.8" fill="#dc143c" font-weight="normal" text-anchor="middle" >Support2 1.70642</text>
<text x="458" y="617.3" font-family="Liberation Sans" font-size="10.8" fill="#dc143c" font-weight="normal" text-anchor="middle" >Support2 1.71166</text>
<text x="650" y="734.3" font-family="Liberation Sans" font-size="10.8" fill="#dc143c" font-weight="normal" text-anchor="middle" >Support2 1.70633</text>
<text x="842" y="656.3" font-family="Liberation Sans" font-size="10.8" fill="#dc143c" font-weight="normal" text-anchor="middle" >Support2 1.70991</text>
<text x="1034" y="650.3" font-family="Liberation Sans" font-size="10.8" fill="#dc143c" font-weight="normal" text-anchor="middle" >Support2 1.71018</text>
<text x="1226" y="464.3" font-family="Liberation Sans" font-size="10.8" fill="#dc143c" font-weight="normal" text-anchor="middle" >Support2 1.71869</text>
<text x="458" y="667.3" font-family="Liberation Sans" font-size="10.8" fill="#ff0000" font-weight="normal" text-anchor="middle" >Support3 1.70937</text>
<text x="842" y="699.3" font-family="Liberation Sans" font-size="10.8" fill="#ff0000" font-weight="normal" text-anchor="middle" >Support3 1.70791</text>
<text x="1034" y="732.3" font-family="Liberation Sans" font-size="10.8" fill="#ff0000" font-weight="normal" text-anchor="middle" >Support3 1.70643</text>
<text x="1226" y="519.3" font-family="Liberation Sans" font-size="10.8" fill="#ff0000" font-weight="normal" text-anchor="middle" >Support3 1.71618</text>
<polyline points="5.0,641.0 41.8,594.7 102.0,537.2 136.0,560.7 151.6,568.6 167.3,573.3 183.0,571.2 198.7,566.0 214.4,558.1 230.0,549.0 261.4,532.7 280.0,533.3 297.0,534.8 358.6,545.8 391.5,537.5 423.0,525.2 454.5,521.1 489.6,438.9 504.5,398.5 518.3,360.8 530.9,343.2 551.0,318.1 576.1,300.5 613.8,282.2 646.5,298.0 676.6,328.1 711.8,345.7 750.0,373.4 770.0,391.0 797.4,414.7 842.2,463.3 849.7,469.5 869.7,484.4 892.0,519.3 900.8,532.8 916.0,538.5 934.7,542.8 991.3,526.5 1061.6,499.6 1126.0,483.6 1129.0,479.6 1144.9,453.7 1159.8,432.8 1175.8,415.9 1189.7,400.9 1197.7,402.3 1221.6,409.9 1227.6,401.9 1235.0,389.0" fill="none" stroke="#ffa500" stroke-width="1" />
<polyline points="41.8,594.7 102.0,537.2" fill="none" stroke="#8b0000" stroke-width="3" stroke-linejoin="round" stroke-linecap="round"/>
<polyline points="136.0,560.7 151.6,568.6 167.3,573.3 183.0,571.2 198.7,566.0 214.4,558.1 230.0,549.0" fill="none" stroke="#32cd32" stroke-width="3" stroke-linejoin="round" stroke-linecap="round"/>
<polyline points="297.0,534.8 358.6,545.8 391.5,537.5 423.0,525.2 454.5,521.1" fill="none" stroke="#32cd32" stroke-width="3" stroke-linejoin="round" stroke-linecap="round"/>
<polyline points="489.6,438.9 504.5,398.5 518.3,360.8 530.9,343.2 551.0,318.1 576.1,300.5 613.8,282.2 646.5,298.0 676.6,328.1 711.8,345.7 750.0,373.4 770.0,391.0 797.4,414.7" fill="none" stroke="#8b0000" stroke-width="3" stroke-linejoin="round" stroke-linecap="round"/>
<polyline points="842.2,463.3 849.7,469.5 869.7,484.4 892.0,519.3 900.8,532.8 916.0,538.5 934.7,542.8 991.3,526.5 1061.6,499.6 1126.0,483.6 1129.0,479.6 1144.9,453.7 1159.8,432.8 1175.8,415.9 1189.7,400.9 1197.7,402.3 1221.6,409.9 1227.6,401.9 1235.0,389.0" fill="none" stroke="#32cd32" stroke-width="3" stroke-linejoin="round" stroke-linecap="round"/>
<polyline points="0.0,580.0 166.5,580.0" fill="none" stroke="#00ffff" stroke-width="2.2" stroke-linejoin="miter"/>
<polyline points="166.5,580.0 169.5,551.0 358.5,551.0" fill="none" stroke="#00ffff" stroke-width="2.2" stroke-linejoin="miter"/>
<polyline points="358.5,551.0 361.5,476.0 550.5,476.0" fill="none" stroke="#00ffff" stroke-width="2.2" stroke-linejoin="miter"/>
<polyline points="550.5,476.0 553.5,510.0 742.5,510.0" fill="none" stroke="#ff00ff" stroke-width="2.2" stroke-linejoin="miter"/>
<polyline points="742.5,510.0 745.5,530.0 934.5,530.0" fill="none" stroke="#ff00ff" stroke-width="2.2" stroke-linejoin="miter"/>
<polyline points="934.5,530.0 937.5,424.0 1126.5,424.0" fill="none" stroke="#00ffff" stroke-width="2.2" stroke-linejoin="miter"/>
<polyline points="1126.5,424.0 1129.5,309.0 1233.0,309.0" fill="none" stroke="#00ffff" stroke-width="2.2" stroke-linejoin="miter"/>
<text x="74" y="590.6" font-family="Liberation Sans" font-size="10.8" fill="#00ffff" font-weight="normal" text-anchor="middle" >Pivot 1.71288</text>
<text x="266" y="561.6" font-family="Liberation Sans" font-size="10.8" fill="#00ffff" font-weight="normal" text-anchor="middle" >Pivot 1.71419</text>
<text x="458" y="486.6" font-family="Liberation Sans" font-size="10.8" fill="#00ffff" font-weight="normal" text-anchor="middle" >Pivot 1.71764</text>
<text x="650" y="520.6" font-family="Liberation Sans" font-size="10.8" fill="#ff00ff" font-weight="normal" text-anchor="middle" >Pivot 1.71608</text>
<text x="842" y="540.6" font-family="Liberation Sans" font-size="10.8" fill="#ff00ff" font-weight="normal" text-anchor="middle" >Pivot 1.71516</text>
<text x="1034" y="434.6" font-family="Liberation Sans" font-size="10.8" fill="#00ffff" font-weight="normal" text-anchor="middle" >Pivot 1.72000</text>
<text x="1226" y="319.6" font-family="Liberation Sans" font-size="10.8" fill="#00ffff" font-weight="normal" text-anchor="middle" >Pivot 1.72527</text>
<polyline points="6.5,581.6 19.6,584.2 26.1,592.1 30.8,584.2 35.3,593.4 41.8,603.9 46.5,601.2 51.0,584.2 54.4,574.3 58.0,597.3 60.7,586.9 64.1,599.9 66.7,607.8 70.1,598.6 75.0,630.0 82.4,596.0 88.9,610.4 94.1,626.1 99.3,607.8 104.6,598.6 109.8,586.9 115.0,558.1 121.6,529.3 126.8,503.2 129.9,497.5 132.0,505.8 134.1,523.6 142.5,526.2 146.4,522.8 150.3,526.2 156.9,518.9 162.1,516.3 166.5,514.2 170.5,526.2 173.9,528.0 178.6,511.0 182.2,518.9 188.2,517.6 194.0,513.7 198.7,521.5 203.1,525.9 207.8,525.4 211.2,519.7 214.4,526.7 222.2,522.0 230.1,532.0 234.0,532.0 237.9,525.4 242.4,537.2 246.5,516.8 251.0,530.7 254.9,534.6 258.8,516.3 261.4,525.4 264.1,516.3 269.3,477.1 274.0,475.8 280.0,464.0 281.9,458.9 286.0,461.6 290.7,500.5 298.4,484.1 302.5,514.2 307.1,498.4 310.7,505.5 318.4,440.3 323.0,466.3 330.7,475.1 342.2,467.1 347.1,457.5 350.4,459.5 357.3,447.7 360.0,451.2 363.6,458.9 366.8,448.5 369.6,455.3 382.7,432.1 386.0,434.8 391.0,445.8 399.7,442.5 406.6,446.6 410.7,440.8 418.9,450.7 423.0,439.5 427.1,451.8 431.8,449.0 438.6,470.4 443.0,427.9 450.4,433.4 453.2,412.9 458.6,395.9 461.4,407.4 468.2,443.0 474.2,473.2 478.6,461.4 481.4,488.2 485.2,474.5 487.4,507.4 491.5,485.5 495.1,500.5 498.9,489.6 503.8,522.5 510.7,559.5 514.8,556.7 518.9,574.5 529.9,573.2 535.3,589.6 540.0,582.7 549.9,555.1 558.6,560.1 562.4,553.9 566.8,573.3 574.3,561.3 578.5,565.8 582.8,557.6 587.3,567.1 594.7,574.5 599.7,569.5 604.2,568.8 607.2,564.6 610.4,571.3 615.9,568.3 619.7,563.3 623.4,560.8 627.1,553.4 630.9,517.2 634.1,489.8 637.1,493.6 639.6,514.7 642.6,544.6 646.3,538.4 650.8,554.6 655.3,538.4 659.0,534.7 662.5,507.3 665.7,505.3 670.7,536.4 675.7,527.7 679.4,513.5 683.2,522.2 686.4,580.8 689.9,542.1 694.4,540.1 698.1,572.0 702.6,541.4 706.3,547.1 713.8,514.0 721.8,512.2 725.5,497.3 731.8,513.5 738.0,511.0 743.0,514.7 746.7,548.4 750.4,547.1 754.2,519.7 759.2,520.2 765.4,514.7 771.6,498.5 782.3,482.4 786.6,487.8 794.0,482.4 800.0,479.9 802.9,474.0 809.9,479.4 817.3,470.7 822.3,450.8 826.1,459.5 829.8,437.1 834.3,450.8 838.5,439.6 842.2,439.6 847.2,455.8 852.2,443.3 857.2,419.7 860.9,424.6 865.2,415.9 869.7,427.1 874.1,430.9 877.6,392.2 882.6,358.6 885.1,379.8 889.6,379.8 897.1,361.1 902.0,359.9 908.3,354.9 914.5,349.4 922.0,353.6 929.4,372.3 938.2,373.6 950.6,364.8 958.1,353.6 966.8,372.3 975.5,364.8 984.3,355.6 994.2,364.3 1004.2,357.4 1018.6,336.9 1026.6,353.6 1030.3,343.7 1035.3,361.1 1040.3,362.4 1046.0,372.3 1050.0,349.9 1052.9,341.6 1062.3,326.6 1066.3,340.6 1070.9,337.6 1074.8,299.7 1078.4,259.5 1082.2,275.8 1086.8,296.7 1090.2,283.8 1093.8,300.7 1098.2,307.3 1102.7,285.8 1105.7,291.7 1109.7,279.8 1114.7,268.8 1117.7,268.8 1122.1,267.4 1125.7,275.8 1130.6,296.7 1138.0,277.8 1141.6,280.8 1146.6,291.7 1150.6,279.8 1154.6,301.7 1157.5,318.6 1159.1,327.6 1169.5,312.7 1177.5,305.7 1187.4,301.1 1191.4,305.7 1195.4,303.7 1203.4,283.8 1206.4,271.8 1209.4,252.9 1211.7,242.9 1214.9,237.5 1219.3,236.9 1222.3,232.0 1224.3,237.9 1226.7,250.9 1230.3,242.3 1234.7,250.9" fill="none" stroke="#00ff00" stroke-width="1" />
<path d="M6 280 H1553" stroke="#32cd32" stroke-width="2" stroke-dasharray="9 6 3 6" shape-rendering="crispEdges"/>
<path d="M6 362 H1553" stroke="#32cd32" stroke-width="2" stroke-dasharray="9 6 3 6" shape-rendering="crispEdges"/>
<path d="M13 574.0 Q13 585.6 24.6 585.6 Q13 585.6 13 597.2 Q13 585.6 1.4000000000000004 585.6 Q13 585.6 13 574.0 Z" fill="none" stroke="#00ffff" stroke-width="2" stroke-linejoin="miter"/>
<path d="M481.4 464.79999999999995 Q481.4 476.4 493.0 476.4 Q481.4 476.4 481.4 488.0 Q481.4 476.4 469.79999999999995 476.4 Q481.4 476.4 481.4 464.79999999999995 Z" fill="none" stroke="#00ffff" stroke-width="2" stroke-linejoin="miter"/>
<path d="M493.2 498.5 Q493.2 510.1 504.8 510.1 Q493.2 510.1 493.2 521.7 Q493.2 510.1 481.59999999999997 510.1 Q493.2 510.1 493.2 498.5 Z" fill="none" stroke="#00ffff" stroke-width="2" stroke-linejoin="miter"/>
<path d="M1157.5 316.0 Q1157.5 327.6 1169.1 327.6 Q1157.5 327.6 1157.5 339.20000000000005 Q1157.5 327.6 1145.9 327.6 Q1157.5 327.6 1157.5 316.0 Z" fill="none" stroke="#00ffff" stroke-width="2" stroke-linejoin="miter"/>
<path d="M633.9 467.5 Q633.9 479.1 645.5 479.1 Q633.9 479.1 633.9 490.70000000000005 Q633.9 479.1 622.3 479.1 Q633.9 479.1 633.9 467.5 Z" fill="none" stroke="#ff00ff" stroke-width="2" stroke-linejoin="miter"/>
<path d="M661.8 487.4 Q661.8 499 673.4 499 Q661.8 499 661.8 510.6 Q661.8 499 650.1999999999999 499 Q661.8 499 661.8 487.4 Z" fill="none" stroke="#ff00ff" stroke-width="2" stroke-linejoin="miter"/>
<path d="M725.5 478.2 Q725.5 489.8 737.1 489.8 Q725.5 489.8 725.5 501.40000000000003 Q725.5 489.8 713.9 489.8 Q725.5 489.8 725.5 478.2 Z" fill="none" stroke="#ff00ff" stroke-width="2" stroke-linejoin="miter"/>
<path d="M753.4 498.9 Q753.4 510.5 765.0 510.5 Q753.4 510.5 753.4 522.1 Q753.4 510.5 741.8 510.5 Q753.4 510.5 753.4 498.9 Z" fill="none" stroke="#ff00ff" stroke-width="2" stroke-linejoin="miter"/>
<path d="M802.4 492.5 L813 504.5 H807.5 V516.5 H797.3 V504.5 H791.8 Z" fill="none" stroke="#ffffff" stroke-width="1.6" stroke-linejoin="miter"/>
<text x="1272.3" y="146.8" font-family="Liberation Sans" font-size="13" fill="#ffa500" font-weight="normal" text-anchor="middle" >R138</text>
<text x="1272.3" y="252.8" font-family="Liberation Sans" font-size="13" fill="#00ffff" font-weight="normal" text-anchor="middle" >R100</text>
<text x="1272.3" y="312.8" font-family="Liberation Sans" font-size="13" fill="#ff0000" font-weight="normal" text-anchor="middle" >R78</text>
<text x="1272.3" y="359.8" font-family="Liberation Sans" font-size="13" fill="#00ff00" font-weight="normal" text-anchor="middle" >R61</text>
<text x="1272.3" y="424.8" font-family="Liberation Sans" font-size="13" fill="#ff00ff" font-weight="normal" text-anchor="middle" >R38</text>
<text x="1273.8" y="531.8" font-family="Liberation Sans" font-size="13" fill="#ffff00" font-weight="normal" text-anchor="middle" >Pivot</text>
<text x="1272.3" y="637.8" font-family="Liberation Sans" font-size="13" fill="#ff00ff" font-weight="normal" text-anchor="middle" >S38</text>
<text x="1272.3" y="703.8" font-family="Liberation Sans" font-size="13" fill="#00ff00" font-weight="normal" text-anchor="middle" >S61</text>
<text x="1272.3" y="750.8" font-family="Liberation Sans" font-size="13" fill="#ff0000" font-weight="normal" text-anchor="middle" >S78</text>
<path d="M1130 137.5 H1320" stroke="#ffffff" stroke-width="1" stroke-dasharray="4 3" shape-rendering="crispEdges"/>
<text x="1139.8" y="149.8" font-family="Liberation Serif" font-size="14" fill="#ffffff" font-weight="normal" text-anchor="start" textLength="171.7" lengthAdjust="spacingAndGlyphs" >TARGET LEVEL 3 (1.73318)</text>
<path d="M1130 303.5 H1320" stroke="#ffffff" stroke-width="1" stroke-dasharray="4 3" shape-rendering="crispEdges"/>
<text x="1139.8" y="315.8" font-family="Liberation Serif" font-size="14" fill="#ffffff" font-weight="normal" text-anchor="start" textLength="172.7" lengthAdjust="spacingAndGlyphs" >TARGET LEVEL 2 (1.72555)</text>
<path d="M1130 406.5 H1320" stroke="#ffffff" stroke-width="1" stroke-dasharray="4 3" shape-rendering="crispEdges"/>
<text x="1139.8" y="418.8" font-family="Liberation Serif" font-size="14" fill="#ffffff" font-weight="normal" text-anchor="start" textLength="172.7" lengthAdjust="spacingAndGlyphs" >TARGET LEVEL 1 (1.72083)</text>
<path d="M1130 483.5 H1320" stroke="#ffffff" stroke-width="1" stroke-dasharray="4 3" shape-rendering="crispEdges"/>
<text x="1145.4" y="495.8" font-family="Liberation Serif" font-size="14" fill="#ffffff" font-weight="normal" text-anchor="start" textLength="159.2" lengthAdjust="spacingAndGlyphs" >SIGNAL LEVEL (1.71733)</text>
<path d="M1130 559.5 H1320" stroke="#ff0000" stroke-width="1" stroke-dasharray="4 3" shape-rendering="crispEdges"/>
<text x="1138.6" y="571.8" font-family="Liberation Serif" font-size="14" fill="#ff0000" font-weight="normal" text-anchor="start" textLength="172.4" lengthAdjust="spacingAndGlyphs" >STOP LEVEL -349 (1.71384)</text>
<path d="M9 118 h7.4 l-3.7 4.2 z" fill="#ffffff"/>
<text x="21" y="122.9" font-family="Liberation Sans" font-size="9.8" fill="#ffffff" font-weight="normal" text-anchor="start" textLength="207.8" lengthAdjust="spacingAndGlyphs" >GBPCAD,M30  1.72833 1.72877 1.72791 1.72795</text>
<text x="12.6" y="277.2" font-family="Liberation Sans" font-size="9.4" fill="#ffffff" font-weight="bold" text-anchor="start" textLength="63" lengthAdjust="spacingAndGlyphs" >#8309 184 buy</text>
<text x="12.6" y="359" font-family="Liberation Sans" font-size="9.4" fill="#ffffff" font-weight="bold" text-anchor="start" textLength="63" lengthAdjust="spacingAndGlyphs" >#8307 113 buy</text>
<rect x="75.7" y="270" width="27" height="9" fill="#ff0000" rx="2"/>
<rect x="99" y="272.3" width="7" height="5" fill="#ff0000" rx="2"/>
<rect x="77.3" y="351.8" width="26" height="9.5" fill="#ff0000" rx="2"/>
<text x="6.6" y="740.8" font-family="Liberation Sans" font-size="32" fill="#ff0000" font-weight="normal" text-anchor="start" textLength="122.5" lengthAdjust="spacingAndGlyphs" stroke="#ff0000" stroke-width="0.35">1.72795</text>
<path d="M1238 112 h9.4 l-4.7 5.4 z" fill="#778899"/>
<path d="M196 198 L168.3 41" stroke="#ff0000" stroke-width="3.3" stroke-linecap="round"/>
</g>
<path d="M182 118.6 L168.3 41" stroke="#ff0000" stroke-width="3.3" stroke-linecap="butt"/>
<path d="M165.4 27.6 L172.9 41.4 L163.4 43 Z" fill="#ff0000"/>
<g clip-path="url(#cp)">
<rect x="39" y="213" width="5.2" height="162.5" rx="2.4" fill="#ff0000"/>
<path d="M1260 160.3 L1412 203.6 L1442.6 158.2" stroke="#ff0000" stroke-width="3.3" stroke-linecap="round" stroke-linejoin="round" fill="none"/>
<path d="M1246.4 156.1 L1262.2 156 L1259.6 165 Z" fill="#ff0000"/>
<path d="M1448.5 148.8 L1437.2 158.6 L1445.4 163.2 Z" fill="#ff0000"/>
<path d="M1357.3 589.5 L1440.9 718.2" stroke="#ff0000" stroke-width="3.4" stroke-linecap="round"/>
<path d="M1448.5 730.9 L1436.8 720.3 L1445 715.8 Z" fill="#ff0000"/>
</g>
<rect x="6" y="752" width="1" height="4" fill="#ffffff" />
<text x="5.2" y="765.3" font-family="Liberation Sans" font-size="9.8" fill="#ffffff" font-weight="normal" text-anchor="start" textLength="51.3" lengthAdjust="spacingAndGlyphs" >27 Feb 2024</text>
<rect x="70" y="752" width="1" height="4" fill="#ffffff" />
<text x="69.2" y="765.3" font-family="Liberation Sans" font-size="9.8" fill="#ffffff" font-weight="normal" text-anchor="start" textLength="54.6" lengthAdjust="spacingAndGlyphs" >27 Feb 11:30</text>
<rect x="134" y="752" width="1" height="4" fill="#ffffff" />
<text x="133.2" y="765.3" font-family="Liberation Sans" font-size="9.8" fill="#ffffff" font-weight="normal" text-anchor="start" textLength="54.6" lengthAdjust="spacingAndGlyphs" >27 Feb 19:30</text>
<rect x="198" y="752" width="1" height="4" fill="#ffffff" />
<text x="197.2" y="765.3" font-family="Liberation Sans" font-size="9.8" fill="#ffffff" font-weight="normal" text-anchor="start" textLength="54.6" lengthAdjust="spacingAndGlyphs" >28 Feb 03:30</text>
<rect x="262" y="752" width="1" height="4" fill="#ffffff" />
<text x="261.2" y="765.3" font-family="Liberation Sans" font-size="9.8" fill="#ffffff" font-weight="normal" text-anchor="start" textLength="54.6" lengthAdjust="spacingAndGlyphs" >28 Feb 11:30</text>
<rect x="326" y="752" width="1" height="4" fill="#ffffff" />
<text x="325.2" y="765.3" font-family="Liberation Sans" font-size="9.8" fill="#ffffff" font-weight="normal" text-anchor="start" textLength="54.6" lengthAdjust="spacingAndGlyphs" >28 Feb 19:30</text>
<rect x="390" y="752" width="1" height="4" fill="#ffffff" />
<text x="389.2" y="765.3" font-family="Liberation Sans" font-size="9.8" fill="#ffffff" font-weight="normal" text-anchor="start" textLength="54.6" lengthAdjust="spacingAndGlyphs" >29 Feb 03:30</text>
<rect x="454" y="752" width="1" height="4" fill="#ffffff" />
<text x="453.2" y="765.3" font-family="Liberation Sans" font-size="9.8" fill="#ffffff" font-weight="normal" text-anchor="start" textLength="54.6" lengthAdjust="spacingAndGlyphs" >29 Feb 11:30</text>
<rect x="518" y="752" width="1" height="4" fill="#ffffff" />
<text x="517.2" y="765.3" font-family="Liberation Sans" font-size="9.8" fill="#ffffff" font-weight="normal" text-anchor="start" textLength="54.6" lengthAdjust="spacingAndGlyphs" >29 Feb 19:30</text>
<rect x="582" y="752" width="1" height="4" fill="#ffffff" />
<text x="581.2" y="765.3" font-family="Liberation Sans" font-size="9.8" fill="#ffffff" font-weight="normal" text-anchor="start" textLength="50.1" lengthAdjust="spacingAndGlyphs" >1 Mar 03:30</text>
<rect x="646" y="752" width="1" height="4" fill="#ffffff" />
<text x="645.2" y="765.3" font-family="Liberation Sans" font-size="9.8" fill="#ffffff" font-weight="normal" text-anchor="start" textLength="50.1" lengthAdjust="spacingAndGlyphs" >1 Mar 11:30</text>
<rect x="710" y="752" width="1" height="4" fill="#ffffff" />
<text x="709.2" y="765.3" font-family="Liberation Sans" font-size="9.8" fill="#ffffff" font-weight="normal" text-anchor="start" textLength="50.1" lengthAdjust="spacingAndGlyphs" >1 Mar 19:30</text>
<rect x="774" y="752" width="1" height="4" fill="#ffffff" />
<text x="773.2" y="765.3" font-family="Liberation Sans" font-size="9.8" fill="#ffffff" font-weight="normal" text-anchor="start" textLength="50.1" lengthAdjust="spacingAndGlyphs" >4 Mar 03:30</text>
<rect x="838" y="752" width="1" height="4" fill="#ffffff" />
<text x="837.2" y="765.3" font-family="Liberation Sans" font-size="9.8" fill="#ffffff" font-weight="normal" text-anchor="start" textLength="50.1" lengthAdjust="spacingAndGlyphs" >4 Mar 11:30</text>
<rect x="902" y="752" width="1" height="4" fill="#ffffff" />
<text x="901.2" y="765.3" font-family="Liberation Sans" font-size="9.8" fill="#ffffff" font-weight="normal" text-anchor="start" textLength="50.1" lengthAdjust="spacingAndGlyphs" >4 Mar 19:30</text>
<rect x="966" y="752" width="1" height="4" fill="#ffffff" />
<text x="965.2" y="765.3" font-family="Liberation Sans" font-size="9.8" fill="#ffffff" font-weight="normal" text-anchor="start" textLength="50.1" lengthAdjust="spacingAndGlyphs" >5 Mar 03:30</text>
<rect x="1030" y="752" width="1" height="4" fill="#ffffff" />
<text x="1029.2" y="765.3" font-family="Liberation Sans" font-size="9.8" fill="#ffffff" font-weight="normal" text-anchor="start" textLength="50.1" lengthAdjust="spacingAndGlyphs" >5 Mar 11:30</text>
<rect x="1094" y="752" width="1" height="4" fill="#ffffff" />
<text x="1093.2" y="765.3" font-family="Liberation Sans" font-size="9.8" fill="#ffffff" font-weight="normal" text-anchor="start" textLength="50.1" lengthAdjust="spacingAndGlyphs" >5 Mar 19:30</text>
<rect x="1158" y="752" width="1" height="4" fill="#ffffff" />
<text x="1157.2" y="765.3" font-family="Liberation Sans" font-size="9.8" fill="#ffffff" font-weight="normal" text-anchor="start" textLength="50.1" lengthAdjust="spacingAndGlyphs" >6 Mar 03:30</text>
<rect x="1222" y="752" width="1" height="4" fill="#ffffff" />
<text x="1221.2" y="765.3" font-family="Liberation Sans" font-size="9.8" fill="#ffffff" font-weight="normal" text-anchor="start" textLength="50.1" lengthAdjust="spacingAndGlyphs" >6 Mar 11:30</text>
<rect x="1554" y="121" width="3" height="1" fill="#ffffff" />
<text x="1559.6" y="124.6" font-family="Liberation Sans" font-size="9.8" fill="#ffffff" font-weight="normal" text-anchor="start" textLength="33.7" lengthAdjust="spacingAndGlyphs" >1.73390</text>
<rect x="1554" y="154" width="3" height="1" fill="#ffffff" />
<text x="1559.6" y="157.6" font-family="Liberation Sans" font-size="9.8" fill="#ffffff" font-weight="normal" text-anchor="start" textLength="33.7" lengthAdjust="spacingAndGlyphs" >1.73240</text>
<rect x="1554" y="187" width="3" height="1" fill="#ffffff" />
<text x="1559.6" y="190.6" font-family="Liberation Sans" font-size="9.8" fill="#ffffff" font-weight="normal" text-anchor="start" textLength="33.7" lengthAdjust="spacingAndGlyphs" >1.73090</text>
<rect x="1554" y="220" width="3" height="1" fill="#ffffff" />
<text x="1559.6" y="223.6" font-family="Liberation Sans" font-size="9.8" fill="#ffffff" font-weight="normal" text-anchor="start" textLength="33.7" lengthAdjust="spacingAndGlyphs" >1.72935</text>
<rect x="1554" y="253" width="3" height="1" fill="#ffffff" />
<text x="1559.6" y="256.6" font-family="Liberation Sans" font-size="9.8" fill="#ffffff" font-weight="normal" text-anchor="start" textLength="33.7" lengthAdjust="spacingAndGlyphs" >1.72785</text>
<rect x="1554" y="286" width="3" height="1" fill="#ffffff" />
<text x="1559.6" y="289.6" font-family="Liberation Sans" font-size="9.8" fill="#ffffff" font-weight="normal" text-anchor="start" textLength="33.7" lengthAdjust="spacingAndGlyphs" >1.72630</text>
<rect x="1554" y="319" width="3" height="1" fill="#ffffff" />
<text x="1559.6" y="322.6" font-family="Liberation Sans" font-size="9.8" fill="#ffffff" font-weight="normal" text-anchor="start" textLength="33.7" lengthAdjust="spacingAndGlyphs" >1.72480</text>
<rect x="1554" y="353" width="3" height="1" fill="#ffffff" />
<text x="1559.6" y="356.6" font-family="Liberation Sans" font-size="9.8" fill="#ffffff" font-weight="normal" text-anchor="start" textLength="33.7" lengthAdjust="spacingAndGlyphs" >1.72325</text>
<rect x="1554" y="386" width="3" height="1" fill="#ffffff" />
<text x="1559.6" y="389.6" font-family="Liberation Sans" font-size="9.8" fill="#ffffff" font-weight="normal" text-anchor="start" textLength="33.7" lengthAdjust="spacingAndGlyphs" >1.72175</text>
<rect x="1554" y="419" width="3" height="1" fill="#ffffff" />
<text x="1559.6" y="422.6" font-family="Liberation Sans" font-size="9.8" fill="#ffffff" font-weight="normal" text-anchor="start" textLength="33.7" lengthAdjust="spacingAndGlyphs" >1.72025</text>
<rect x="1554" y="452" width="3" height="1" fill="#ffffff" />
<text x="1559.6" y="455.6" font-family="Liberation Sans" font-size="9.8" fill="#ffffff" font-weight="normal" text-anchor="start" textLength="33.7" lengthAdjust="spacingAndGlyphs" >1.71875</text>
<rect x="1554" y="485" width="3" height="1" fill="#ffffff" />
<text x="1559.6" y="488.6" font-family="Liberation Sans" font-size="9.8" fill="#ffffff" font-weight="normal" text-anchor="start" textLength="33.7" lengthAdjust="spacingAndGlyphs" >1.71720</text>
<rect x="1554" y="518" width="3" height="1" fill="#ffffff" />
<text x="1559.6" y="521.6" font-family="Liberation Sans" font-size="9.8" fill="#ffffff" font-weight="normal" text-anchor="start" textLength="33.7" lengthAdjust="spacingAndGlyphs" >1.71570</text>
<rect x="1554" y="551" width="3" height="1" fill="#ffffff" />
<text x="1559.6" y="554.6" font-family="Liberation Sans" font-size="9.8" fill="#ffffff" font-weight="normal" text-anchor="start" textLength="33.7" lengthAdjust="spacingAndGlyphs" >1.71420</text>
<rect x="1554" y="584" width="3" height="1" fill="#ffffff" />
<text x="1559.6" y="587.6" font-family="Liberation Sans" font-size="9.8" fill="#ffffff" font-weight="normal" text-anchor="start" textLength="33.7" lengthAdjust="spacingAndGlyphs" >1.71270</text>
<rect x="1554" y="617" width="3" height="1" fill="#ffffff" />
<text x="1559.6" y="620.6" font-family="Liberation Sans" font-size="9.8" fill="#ffffff" font-weight="normal" text-anchor="start" textLength="33.7" lengthAdjust="spacingAndGlyphs" >1.71115</text>
<rect x="1554" y="650" width="3" height="1" fill="#ffffff" />
<text x="1559.6" y="653.6" font-family="Liberation Sans" font-size="9.8" fill="#ffffff" font-weight="normal" text-anchor="start" textLength="33.7" lengthAdjust="spacingAndGlyphs" >1.70965</text>
<rect x="1554" y="683" width="3" height="1" fill="#ffffff" />
<text x="1559.6" y="686.6" font-family="Liberation Sans" font-size="9.8" fill="#ffffff" font-weight="normal" text-anchor="start" textLength="33.7" lengthAdjust="spacingAndGlyphs" >1.70815</text>
<rect x="1554" y="716" width="3" height="1" fill="#ffffff" />
<text x="1559.6" y="719.6" font-family="Liberation Sans" font-size="9.8" fill="#ffffff" font-weight="normal" text-anchor="start" textLength="33.7" lengthAdjust="spacingAndGlyphs" >1.70665</text>
<rect x="1554" y="750" width="3" height="1" fill="#ffffff" />
<text x="1559.6" y="753.6" font-family="Liberation Sans" font-size="9.8" fill="#ffffff" font-weight="normal" text-anchor="start" textLength="33.7" lengthAdjust="spacingAndGlyphs" >1.70510</text>
<rect x="1555" y="128" width="37" height="11" fill="#ffa500" />
<text x="1559.6" y="137.3" font-family="Liberation Sans" font-size="9.8" fill="#000000" font-weight="normal" text-anchor="start" textLength="33.7" lengthAdjust="spacingAndGlyphs" >1.73332</text>
<rect x="1555" y="234" width="37" height="11" fill="#00ffff" />
<text x="1559.6" y="243.3" font-family="Liberation Sans" font-size="9.8" fill="#000000" font-weight="normal" text-anchor="start" textLength="33.7" lengthAdjust="spacingAndGlyphs" >1.72844</text>
<rect x="1555" y="294" width="37" height="11" fill="#ff0000" />
<text x="1559.6" y="303.3" font-family="Liberation Sans" font-size="9.8" fill="#000000" font-weight="normal" text-anchor="start" textLength="33.7" lengthAdjust="spacingAndGlyphs" >1.72571</text>
<rect x="1555" y="341" width="37" height="11" fill="#00ff00" />
<text x="1559.6" y="350.3" font-family="Liberation Sans" font-size="9.8" fill="#000000" font-weight="normal" text-anchor="start" textLength="33.7" lengthAdjust="spacingAndGlyphs" >1.72356</text>
<rect x="1555" y="406" width="37" height="11" fill="#ff00ff" />
<text x="1559.6" y="415.3" font-family="Liberation Sans" font-size="9.8" fill="#000000" font-weight="normal" text-anchor="start" textLength="33.7" lengthAdjust="spacingAndGlyphs" >1.72055</text>
<rect x="1555" y="513" width="37" height="11" fill="#ffff00" />
<text x="1559.6" y="522.3" font-family="Liberation Sans" font-size="9.8" fill="#000000" font-weight="normal" text-anchor="start" textLength="33.7" lengthAdjust="spacingAndGlyphs" >1.71567</text>
<rect x="1555" y="619" width="37" height="11" fill="#ff00ff" />
<text x="1559.6" y="628.3" font-family="Liberation Sans" font-size="9.8" fill="#000000" font-weight="normal" text-anchor="start" textLength="33.7" lengthAdjust="spacingAndGlyphs" >1.71079</text>
<rect x="1555" y="685" width="37" height="11" fill="#00ff00" />
<text x="1559.6" y="694.3" font-family="Liberation Sans" font-size="9.8" fill="#000000" font-weight="normal" text-anchor="start" textLength="33.7" lengthAdjust="spacingAndGlyphs" >1.70778</text>
<rect x="1555" y="732" width="37" height="11" fill="#ff0000" />
<text x="1559.6" y="741.3" font-family="Liberation Sans" font-size="9.8" fill="#000000" font-weight="normal" text-anchor="start" textLength="33.7" lengthAdjust="spacingAndGlyphs" >1.70563</text>
<rect x="1555" y="246" width="37" height="11" fill="#ffffff" />
<text x="1559.6" y="255.3" font-family="Liberation Sans" font-size="9.8" fill="#000000" font-weight="normal" text-anchor="start" textLength="33.7" lengthAdjust="spacingAndGlyphs" >1.72795</text>
</svg>
</body></html>
